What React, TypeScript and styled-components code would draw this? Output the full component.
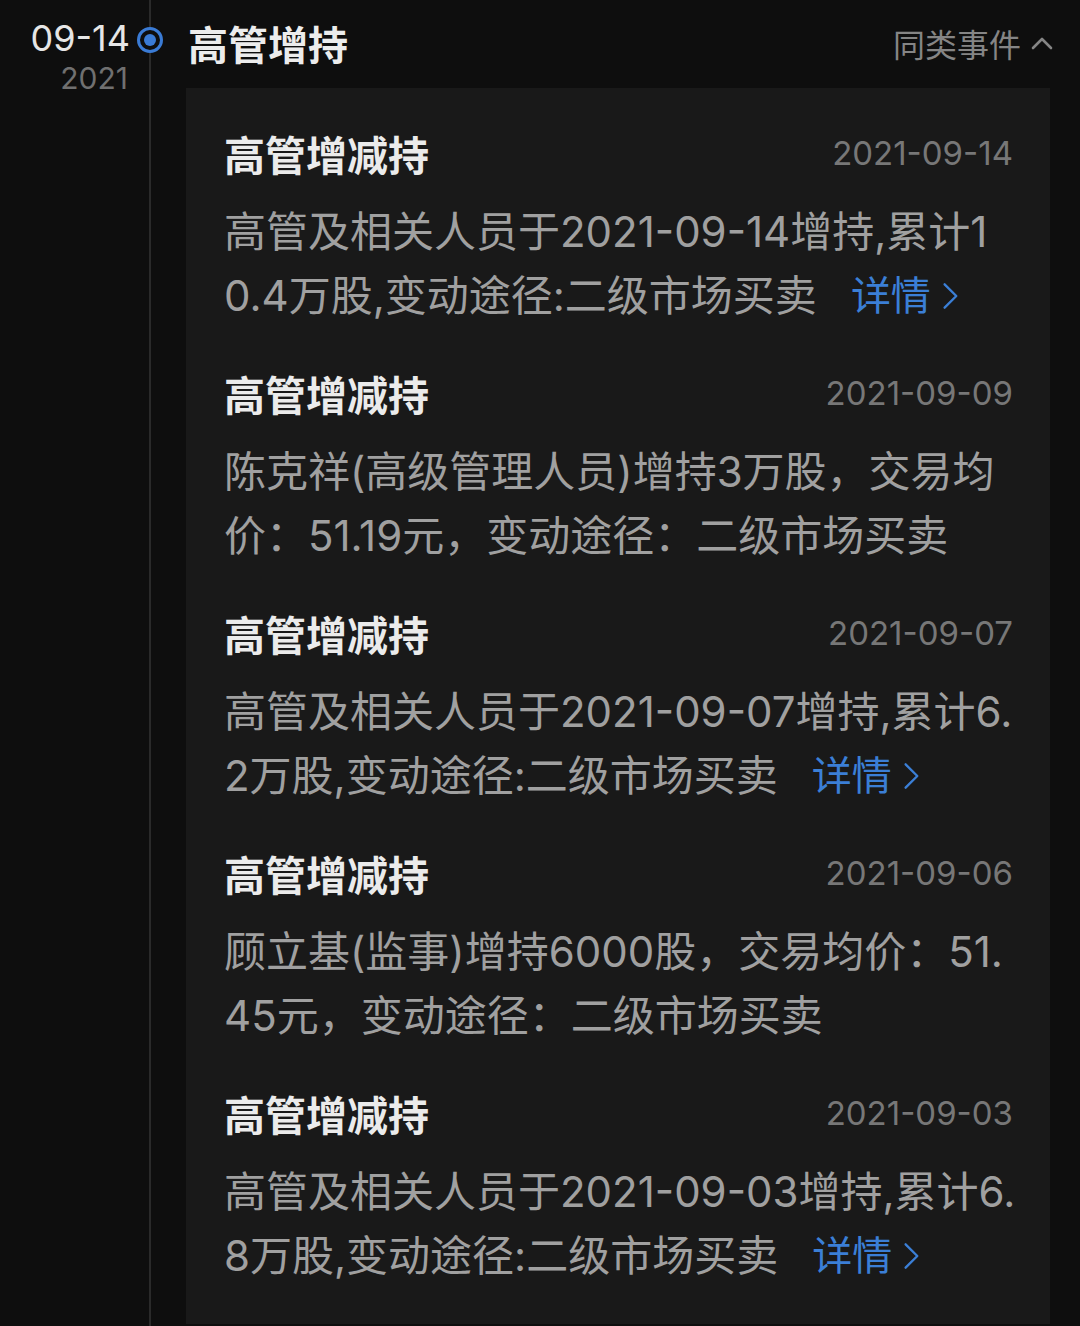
import React from "react";
import styled, { createGlobalStyle } from "styled-components";

const Global = createGlobalStyle`
  html, body { margin: 0; padding: 0; background: #0e0e0e; }
  body { font-family: Inter, "Noto Sans CJK SC", "Noto Sans", sans-serif; }
`;

const Page = styled.div`
  display: grid;
  grid-template-columns: 132px 36px minmax(0, 1fr);
  min-height: 1326px;
  height: 1326px;
  overflow: hidden;
  background: #0e0e0e;
`;

const DateCol = styled.div`
  display: flex;
  flex-direction: column;
  align-items: flex-end;
  padding-top: 18px;
  padding-right: 2px;
`;

const DayText = styled.div`
  font-size: 36px;
  line-height: 40px;
  color: #e6e6e6;
`;

const YearText = styled.div`
  font-size: 30px;
  line-height: 40px;
  color: #707070;
  margin-right: 2px;
`;

const Rail = styled.div`
  position: relative;
  &::before {
    content: "";
    position: absolute;
    left: 17px;
    top: 0;
    bottom: 0;
    width: 2px;
    background: #2a2a2a;
  }
`;

const Dot = styled.div`
  position: absolute;
  left: 5px;
  top: 27px;
  width: 20px;
  height: 20px;
  border-radius: 50%;
  border: 3px solid #3a7bd5;
  background: #0e0e0e;
  display: flex;
  align-items: center;
  justify-content: center;
  &::after {
    content: "";
    width: 12px;
    height: 12px;
    border-radius: 50%;
    background: #3a7bd5;
  }
`;

const Main = styled.div`
  min-width: 0;
  margin-left: 18px;
  padding-right: 30px;
  display: flex;
  flex-direction: column;
`;

const Header = styled.div`
  height: 88px;
  display: flex;
  align-items: center;
  justify-content: space-between;
`;

const HeaderTitle = styled.div`
  font-size: 40px;
  font-weight: 700;
  color: #ececec;
  padding-left: 2px;
  margin-top: -3px;
`;

const Similar = styled.div`
  display: flex;
  align-items: center;
  gap: 10px;
  font-size: 32px;
  color: #858585;
  margin-right: -3px;
  margin-top: -3px;
`;

const Card = styled.div`
  min-width: 0;
  background: #191919;
  padding: 0 37px 36px 38px;
  display: flex;
  flex-direction: column;
`;

const Item = styled.div`
  padding-top: 37px;
`;

const ItemHead = styled.div`
  display: flex;
  align-items: center;
  justify-content: space-between;
  height: 56px;
`;

const ItemTitle = styled.div`
  font-size: 41px;
  font-weight: 700;
  color: #ebebeb;
`;

const ItemDate = styled.div`
  font-size: 33px;
  color: #777777;
`;

const Body = styled.div`
  margin-top: 19px;
  font-size: 42px;
  line-height: 64px;
  color: #a0a0a0;
  white-space: nowrap;
`;

const Line = styled.div`
  display: flex;
  align-items: center;
`;

const Detail = styled.span`
  display: inline-flex;
  align-items: center;
  gap: 10px;
  margin-left: 34px;
  color: #3b7fd6;
  font-size: 40px;
`;

const Chevron = ({ dir, color, w, h }: { dir: "right" | "up"; color: string; w: number; h: number }) =>
  dir === "right" ? (
    <svg width={w} height={h} viewBox="0 0 20 30" fill="none">
      <path d="M4 2 L17 15 L4 28" stroke={color} strokeWidth="2.6" strokeLinecap="round" strokeLinejoin="round" />
    </svg>
  ) : (
    <svg width={w} height={h} viewBox="0 0 22 14" fill="none">
      <path d="M2 12 L11 3 L20 12" stroke={color} strokeWidth="2.6" strokeLinecap="round" strokeLinejoin="round" />
    </svg>
  );

type Entry = { date: string; lines: string[]; detail?: boolean };

const entries: Entry[] = [
  {
    date: "2021-09-14",
    lines: ["高管及相关人员于2021-09-14增持,累计1", "0.4万股,变动途径:二级市场买卖"],
    detail: true,
  },
  {
    date: "2021-09-09",
    lines: ["陈克祥(高级管理人员)增持3万股，交易均", "价：51.19元，变动途径：二级市场买卖"],
  },
  {
    date: "2021-09-07",
    lines: ["高管及相关人员于2021-09-07增持,累计6.", "2万股,变动途径:二级市场买卖"],
    detail: true,
  },
  {
    date: "2021-09-06",
    lines: ["顾立基(监事)增持6000股，交易均价：51.", "45元，变动途径：二级市场买卖"],
  },
  {
    date: "2021-09-03",
    lines: ["高管及相关人员于2021-09-03增持,累计6.", "8万股,变动途径:二级市场买卖"],
    detail: true,
  },
];

export default function App() {
  return (
    <>
      <Global />
      <Page>
        <DateCol>
          <DayText>09-14</DayText>
          <YearText>2021</YearText>
        </DateCol>
        <Rail>
          <Dot />
        </Rail>
        <Main>
          <Header>
            <HeaderTitle>高管增持</HeaderTitle>
            <Similar>
              同类事件
              <Chevron dir="up" color="#858585" w={22} h={14} />
            </Similar>
          </Header>
          <Card>
            {entries.map((e) => (
              <Item key={e.date}>
                <ItemHead>
                  <ItemTitle>高管增减持</ItemTitle>
                  <ItemDate>{e.date}</ItemDate>
                </ItemHead>
                <Body>
                  {e.lines.map((l, i) => (
                    <Line key={i}>
                      <span>{l}</span>
                      {e.detail && i === e.lines.length - 1 && (
                        <Detail>
                          详情
                          <Chevron dir="right" color="#3b7fd6" w={18} h={28} />
                        </Detail>
                      )}
                    </Line>
                  ))}
                </Body>
              </Item>
            ))}
          </Card>
        </Main>
      </Page>
    </>
  );
}
